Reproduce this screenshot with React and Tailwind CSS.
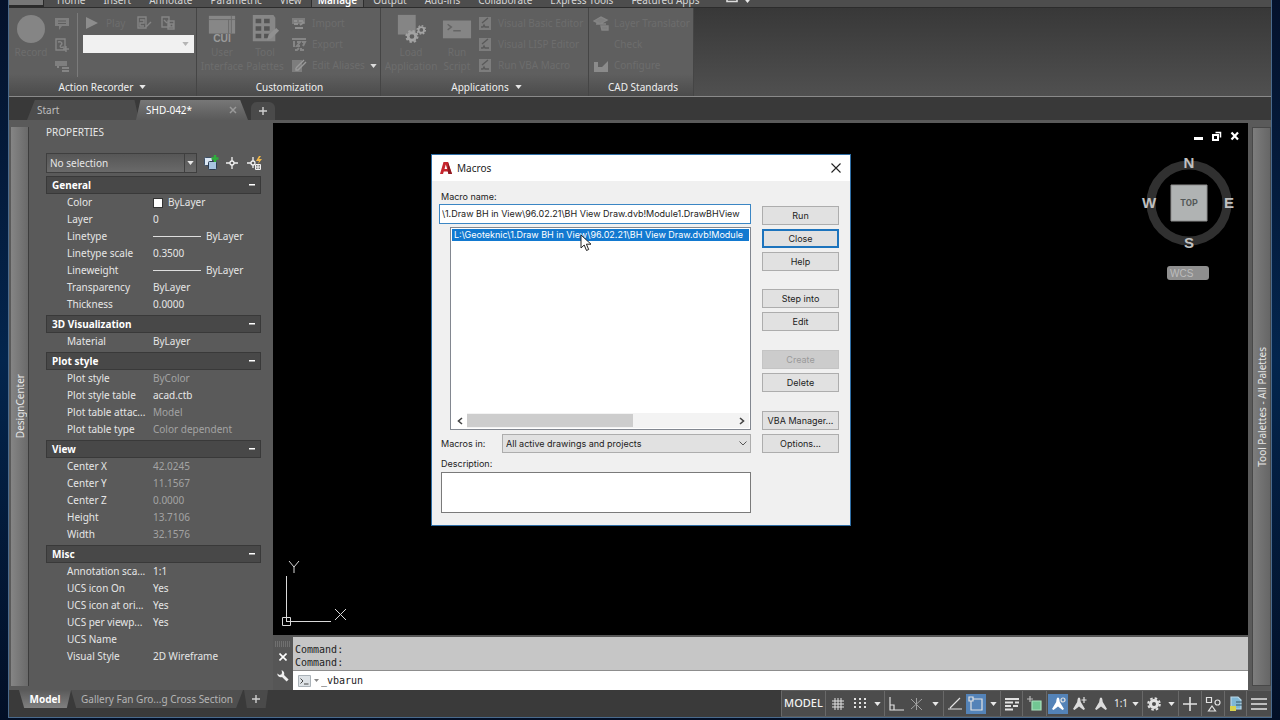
import React from "react";

const Caret = ({ className = "text-[#e8e8e8]" }) => (
  <svg viewBox="0 0 8 5" className={`h-[4px] w-[7px] shrink-0 ${className}`} fill="currentColor" aria-hidden="true">
    <path d="M0 0h8L4 5z" />
  </svg>
);

const ribbonTabs = [
  "Home", "Insert", "Annotate", "Parametric", "View", "Manage",
  "Output", "Add-ins", "Collaborate", "Express Tools", "Featured Apps",
];

function RibbonTabs() {
  return (
    <nav className="flex h-2 items-end overflow-hidden border-b border-[#2c2c2c] bg-[#4d4d4d] text-[10px] leading-[13px] text-[#d6d6d6]">
      <button aria-label="Application menu" className="mr-1 h-2 w-[35px] shrink-0 border-r border-b-2 border-[#2b2b2b] bg-[#777777]" />
      {ribbonTabs.map((t) => (
        <button
          key={t}
          className={
            t === "Manage"
              ? "h-[13px] border-x border-[#2e2e2e] bg-[#626262] px-[6px] font-semibold text-white"
              : "h-[13px] px-[9px]"
          }
        >
          {t}
        </button>
      ))}
      <button aria-label="Ribbon display" className="ml-[18px] flex h-2 items-start gap-[6px]">
        <svg viewBox="0 0 12 6" className="h-[6px] w-3" aria-hidden="true">
          <path d="M1 0v2.5h10V0" fill="none" stroke="#dcdcdc" strokeWidth="1.6" />
          <path d="M4 0h4v1H4z" fill="#dcdcdc" />
        </svg>
        <Caret />
      </button>
    </nav>
  );
}

/* disabled ribbon glyphs */
const Glyph = ({ kind }) => (
  <svg viewBox="0 0 16 16" className="h-4 w-4 shrink-0" fill="none" stroke="#858585" strokeWidth="1.4" aria-hidden="true">
    {kind === "note" && <path d="M1 2h14v8H8l-3 4v-4H1z" fill="#7f7f7f" stroke="none" />}
    {kind === "note" && <path d="M4 5h8M4 7.500h8" stroke="#5f5f5f" strokeWidth="1" />}
    {kind === "input" && <path d="M2 2h9v11H2zM4 5c3-1 5 1 3 3s0 3 3 2M12 9v6M9 12h6" />}
    {kind === "pause" && <path d="M1 3h12v5H1z" fill="#7f7f7f" stroke="none" />}
    {kind === "pause" && <path d="M4 8v2M8 10h7M8 13h7" strokeWidth="2" />}
    {kind === "manage" && <path d="M2 2h8v11H2zM4 5h4v3H4v3h4M10 12l5-5" />}
    {kind === "prefs" && <path d="M2 2h7v10H2zM4 5l3 3M8 6h6v8H8zM10 9h3v3h-3z" />}
    {kind === "import" && <path d="M1 2h13v6H1z" fill="#7d7d7d" stroke="none" />}
    {kind === "import" && <path d="M3 5h3M8 5h4M3 8h4M9 9l4-3M4 12h8" stroke="#909090" strokeWidth="2" />}
    {kind === "export" && <path d="M1 2h14M3 4v6M6 5h3l-3 4h3M11 5h3l-2 4M4 13h2l2-2M10 11v2h3" strokeWidth="2" />}
    {kind === "alias" && <path d="M1 2h10v12H1z" fill="#7d7d7d" stroke="none" />}
    {kind === "alias" && <path d="M5 10l8-8M5 10v2h2l8-8" stroke="#9a9a9a" />}
    {kind === "vba" && <path d="M2 1h12v13H2z" fill="#7d7d7d" stroke="none" />}
    {kind === "vba" && <path d="M5 7l6-5M4 11h2l1-2 1 2h4" stroke="#5a5a5a" />}
    {kind === "layer" && <path d="M1 5l7-4 6 3-7 4zM3 8h10M8 10h7v4H9z" fill="#7f7f7f" />}
    {kind === "config" && <path d="M1 4h4v5h4l6-6v11H1z" fill="#8b8b8b" stroke="none" />}
  </svg>
);

const SmallTool = ({ kind, label, caret }) => (
  <button disabled className="flex h-[21px] items-center gap-[5px] whitespace-nowrap text-[10px] text-[#6d6d6d]">
    <Glyph kind={kind} />
    {label}
    {caret && <Caret className="text-[#dddddd]" />}
  </button>
);

const BigTool = ({ label, className, children }) => (
  <button disabled className={`flex flex-col items-center text-center text-[10px] leading-[14px] text-[#6d6d6d] ${className}`}>
    <svg viewBox="0 0 32 32" className="mb-[2px] h-[30px] w-[30px]" aria-hidden="true">{children}</svg>
    {label.split(" ").map((w) => <span key={w}>{w}</span>)}
  </button>
);

const RibbonPanel = ({ title, caret, className, children }) => (
  <section className={`flex shrink-0 flex-col border-r border-[#454545] bg-linear-to-b from-[#5f5f5f] from-75% to-[#4b4b4b] ${className}`}>
    <div className="flex h-[70px] items-start overflow-hidden pt-[5px]">{children}</div>
    <h2 className="flex h-[18px] items-center justify-center gap-[6px] text-[10px] text-[#efefef]">
      {title}
      {caret && <Caret />}
    </h2>
  </section>
);

function Ribbon() {
  return (
    <div className="flex h-[89px] shrink-0 border-b border-[#8a8a8a] bg-linear-to-b from-[#383838] to-[#505050]">
      <RibbonPanel title="Action Recorder" caret className="w-[188px]">
        <button disabled className="flex w-[41px] flex-col items-center pl-[3px] text-[10px] text-[#6d6d6d]">
          <span className="mt-[2px] mb-[2px] h-7 w-7 rounded-full bg-[#858585]" />
          Record
        </button>
        <div className="ml-1 flex w-[23px] flex-col">
          {["note", "input", "pause"].map((k) => (
            <button key={k} disabled aria-label={k} className="flex h-[21px] items-center"><Glyph kind={k} /></button>
          ))}
        </div>
        <div className="flex h-16 flex-col border-l border-[#7b7b7b] pl-[5px]">
          <div className="flex h-5 items-center pl-[3px]">
            <button disabled className="flex w-12 items-center gap-2 text-[10px] text-[#6d6d6d]">
              <svg viewBox="0 0 12 12" className="h-3 w-3" aria-hidden="true"><path d="M0 0l12 6-12 6z" fill="#8d8d8d" /></svg>
              Play
            </button>
            <button disabled aria-label="Manage macros" className="mr-2 ml-[2px]"><Glyph kind="manage" /></button>
            <button disabled aria-label="Preferences"><Glyph kind="prefs" /></button>
          </div>
          <div className="mt-[2px] flex h-[18px] w-[111px] items-center justify-end bg-[#f1f1f1] pr-[5px]">
            <Caret className="text-[#b5b5b5]" />
          </div>
        </div>
      </RibbonPanel>
      <RibbonPanel title="Customization" className="w-[184px] pl-[2px]">
        <BigTool label="User Interface" className="w-[46px]">
          <path d="M2 3h28v19H2z" fill="#878787" />
          <path d="M2 7h28M23 7v15M26 3v19" stroke="#6c6c6c" />
          <text x="16" y="31" textAnchor="middle" fontSize="11" fontWeight="700" fontFamily="Liberation Sans, sans-serif" fill="#9a9a9a">CUI</text>
        </BigTool>
        <BigTool label="Tool Palettes" className="w-10">
          <path d="M3 2h22l2 3v25H3z" fill="#878787" />
          <path d="M6 6h6v5H6zM15 6h6v5h-6zM6 14h6v5H6zM15 14h6v5h-6zM6 22h6v5H6zM15 22h6v5h-6z" fill="#555" />
          <path d="M18 29l2-6 8-7 3 3-8 8z" fill="#909090" />
        </BigTool>
        <div className="ml-[6px] flex flex-col">
          <SmallTool kind="import" label="Import" />
          <SmallTool kind="export" label="Export" />
          <SmallTool kind="alias" label="Edit Aliases" caret />
        </div>
      </RibbonPanel>
      <RibbonPanel title="Applications" caret className="w-[208px] pl-1">
        <BigTool label="Load Application" className="w-[52px]">
          <path d="M2 2h19v21H2z" fill="#858585" />
          <circle cx="17" cy="25" r="4" fill="none" stroke="#a3a3a3" strokeWidth="3" />
          <circle cx="17" cy="25" r="6" fill="none" stroke="#a3a3a3" strokeWidth="2" strokeDasharray="2.500 2.200" />
          <circle cx="27" cy="18" r="3" fill="none" stroke="#a3a3a3" strokeWidth="2" />
          <circle cx="27" cy="18" r="4.500" fill="none" stroke="#a3a3a3" strokeWidth="1.500" strokeDasharray="1.800 1.700" />
        </BigTool>
        <BigTool label="Run Script" className="w-10">
          <path d="M1 8h30v19H1z" fill="#858585" />
          <path d="M6 12l4 3-4 3M12 19h8" fill="none" stroke="#646464" strokeWidth="1.500" />
        </BigTool>
        <div className="flex flex-col">
          <SmallTool kind="vba" label="Visual Basic Editor" />
          <SmallTool kind="vba" label="Visual LISP Editor" />
          <SmallTool kind="vba" label="Run VBA Macro" />
        </div>
      </RibbonPanel>
      <RibbonPanel title="CAD Standards" className="w-[105px] pl-1">
        <div className="flex flex-col">
          <SmallTool kind="layer" label="Layer Translator" />
          <SmallTool kind="check" label="Check" />
          <SmallTool kind="config" label="Configure" />
        </div>
      </RibbonPanel>
    </div>
  );
}

function DocumentTabs() {
  return (
    <div className="flex h-[26px] shrink-0 items-end border-b-[3px] border-[#5a5a5a] bg-[#393939] pl-[18px] text-[10px] text-[#bdbdbd]">
      <button className="h-5 w-[112px] bg-[#4c4c4c] pl-[10px] text-left [clip-path:polygon(7%_0,96%_0,100%_100%,0_100%)]">Start</button>
      <div className="-ml-[3px] flex h-5 w-28 items-center justify-between bg-linear-to-b from-[#777777] to-[#5a5a5a] pr-[11px] pl-[10px] text-white [clip-path:polygon(4%_0,93%_0,100%_100%,0_100%)]">
        <button>SHD-042*</button>
        <button aria-label="Close tab">
          <svg viewBox="0 0 8 8" className="h-2 w-2" aria-hidden="true"><path d="M1 1l6 6M7 1L1 7" stroke="#9a9a9a" strokeWidth="1.500" /></svg>
        </button>
      </div>
      <button aria-label="New drawing" className="ml-[3px] flex h-[18px] w-6 items-center justify-center rounded-t-md bg-[#4a4a4a]">
        <svg viewBox="0 0 8 8" className="h-2 w-2" aria-hidden="true"><path d="M4 0v8M0 4h8" stroke="#cfcfcf" strokeWidth="1.400" /></svg>
      </button>
    </div>
  );
}

const Line = ({ children }) => (
  <span className="flex items-center gap-[5px]"><span className="h-px w-12 bg-[#dedede]" />{children}</span>
);

const groups = [
  ["General", [
    ["Color", <span className="flex items-center gap-[6px]"><span className="ml-px h-2 w-2 bg-white outline outline-[#333333]" />ByLayer</span>],
    ["Layer", "0"],
    ["Linetype", <Line>ByLayer</Line>],
    ["Linetype scale", "0.3500"],
    ["Lineweight", <Line>ByLayer</Line>],
    ["Transparency", "ByLayer"],
    ["Thickness", "0.0000"],
  ]],
  ["3D Visualization", [["Material", "ByLayer"]]],
  ["Plot style", [
    ["Plot style", "ByColor", true],
    ["Plot style table", "acad.ctb"],
    ["Plot table attac...", "Model", true],
    ["Plot table type", "Color dependent", true],
  ]],
  ["View", [
    ["Center X", "42.0245", true],
    ["Center Y", "11.1567", true],
    ["Center Z", "0.0000", true],
    ["Height", "13.7106", true],
    ["Width", "32.1576", true],
  ]],
  ["Misc", [
    ["Annotation sca...", "1:1"],
    ["UCS icon On", "Yes"],
    ["UCS icon at ori...", "Yes"],
    ["UCS per viewp...", "Yes"],
    ["UCS Name", ""],
    ["Visual Style", "2D Wireframe"],
  ]],
];

function PropertiesPanel() {
  return (
    <aside className="flex w-[264px] shrink-0 bg-[#5a5a5a] text-[10px] text-[#e6e6e6]">
      <div className="mt-1 mb-1 ml-[2px] flex w-[18px] shrink-0 items-center justify-center border-r border-[#3d3d3d] bg-linear-to-r from-[#858585] to-[#6a6a6a] pl-[2px]">
        <span className="rotate-180 whitespace-nowrap [writing-mode:vertical-rl]">DesignCenter</span>
      </div>
      <div className="flex min-w-0 flex-1 flex-col pr-3 pl-[17px]">
        <h2 className="h-[30px] pt-[2px] leading-[14px]">PROPERTIES</h2>
        <div className="mb-[3px] flex h-5 items-center gap-[6px]">
          <button className="flex h-5 w-[151px] shrink-0 items-center justify-between border border-[#3f3f3f] bg-linear-to-b from-[#565656] to-[#6a6a6a] pl-[3px]">
            No selection
            <span className="flex h-full w-3 items-center justify-center border-l border-[#3f3f3f]"><Caret /></span>
          </button>
          <button aria-label="Toggle PICKADD" className="shrink-0">
            <svg viewBox="0 0 16 16" className="h-4 w-4" aria-hidden="true">
              <rect x="1.500" y="2.500" width="8" height="8" rx="1" fill="#dbe7f3" stroke="#3c4f66" />
              <rect x="5.500" y="6.500" width="8" height="8" rx="1" fill="#a8c4e0" stroke="#2c3c50" />
              <path d="M12 0v7M8.500 3.500h7" stroke="#2fae3c" strokeWidth="2.400" />
            </svg>
          </button>
          <button aria-label="Select objects" className="shrink-0">
            <svg viewBox="0 0 16 16" className="h-4 w-4" fill="none" stroke="#f1f1f1" strokeWidth="1.300" aria-hidden="true">
              <circle cx="7" cy="8" r="2" /><path d="M7 2v4M7 10v4M1 8h4M9 8h4" />
            </svg>
          </button>
          <button aria-label="Quick select" className="shrink-0">
            <svg viewBox="0 0 16 16" className="h-4 w-4" fill="none" stroke="#f1f1f1" strokeWidth="1.300" aria-hidden="true">
              <circle cx="6" cy="8" r="2" /><path d="M6 2v4M6 10v3M0 8h4" />
              <path d="M12 1L9 6h3l-1 3 4-5h-3l2-3z" fill="#f1b84a" stroke="none" />
              <path d="M8.500 9.500h5v5h-5zM11 9.500v5M8.500 12h5" fill="#777" strokeWidth="1" />
            </svg>
          </button>
        </div>
        <div className="flex flex-col gap-[2px]">
          {groups.map(([title, rows]) => (
            <section key={title}>
              <button className="flex h-[18px] w-full items-center justify-between border border-[#393939] bg-[#484848] px-[5px] text-[10px] font-bold text-white">
                {title}
                <svg viewBox="0 0 6 2" className="h-[2px] w-[6px]" aria-hidden="true"><path d="M0 0h6v1.500H0z" fill="#fff" /></svg>
              </button>
              <table className="w-full table-fixed">
                <tbody>
                  {rows.map(([name, value, dim]) => (
                    <tr key={name} className="h-[17px] whitespace-nowrap leading-[17px]">
                      <th scope="row" className="w-[107px] p-0 pl-[21px] text-left font-normal">{name}</th>
                      <td className={dim ? "p-0 text-[#a3a3a3]" : "p-0"}>{value}</td>
                    </tr>
                  ))}
                </tbody>
              </table>
            </section>
          ))}
        </div>
      </div>
    </aside>
  );
}

const DialogButton = ({ children, primary, className = "", ...rest }) => (
  <button
    className={`h-[19px] w-full whitespace-nowrap text-center leading-[15px] ${
      primary ? "border-2 border-[#1d74bd]" : "border border-[#adadad]"
    } bg-[#e1e1e1] disabled:border-[#c4c4c4] disabled:bg-[#cccccc] disabled:text-[#9a9a9a] ${className}`}
    {...rest}
  >
    {children}
  </button>
);

function MacrosDialog() {
  return (
    <div role="dialog" aria-labelledby="dlg-title" className="absolute top-[31px] left-[158px] w-[420px] border border-[#2f6ea5] bg-[#f0f0f0] font-[Inter,'Liberation_Sans',sans-serif] text-[9px] text-[#1c1c1c]">
      <header className="flex h-[26px] items-center bg-white pr-[9px] pl-[8px]">
        <svg viewBox="0 0 12 12" className="mr-[5px] h-3 w-3" aria-hidden="true">
          <path d="M0 12L3.500 0h4.500L12 12H8.500L7.800 9.500H3.800L3 12z" fill="#c6262e" />
          <path d="M4.500 7L5.800 2.500 7.200 7z" fill="#fff" />
          <path d="M8 0l4 12H8.500L7.800 9.500z" fill="#8e1a22" />
        </svg>
        <h1 id="dlg-title" className="flex-1 font-['Noto_Sans',sans-serif] text-[10px]">Macros</h1>
        <button aria-label="Close dialog">
          <svg viewBox="0 0 10 10" className="h-[10px] w-[10px]" aria-hidden="true"><path d="M0.500 0.500l9 9M9.500 0.500l-9 9" stroke="#222" strokeWidth="1.100" /></svg>
        </button>
      </header>
      <div className="flex gap-[11px] pr-[11px] pb-3 pl-[7px]">
        <div className="flex min-w-0 flex-1 flex-col">
          <label htmlFor="macro-name" className="mt-2 ml-[2px] h-[15px] leading-[15px]">Macro name:</label>
          <input
            id="macro-name"
            type="text"
            defaultValue="\1.Draw BH in View\96.02.21\BH View Draw.dvb!Module1.DrawBHView"
            className="h-5 w-full border border-[#3b86c4] bg-white px-[2px] pb-px outline-none"
          />
          <div className="mt-[3px] ml-[11px] flex h-[203px] flex-col border border-[#828790] bg-white p-px">
            <ul role="listbox" aria-label="Macros" className="flex-1 overflow-hidden">
              <li role="option" aria-selected="true" className="h-3 overflow-hidden bg-[#1279d0] pl-[2px] leading-3 whitespace-nowrap text-white">
                L:\Geoteknic\1.Draw BH in View\96.02.21\BH View Draw.dvb!Module
              </li>
            </ul>
            <div className="flex h-[15px] items-center bg-[#f3f3f3]">
              <button aria-label="Scroll left" className="flex h-full w-[15px] items-center justify-center bg-white">
                <svg viewBox="0 0 6 8" className="h-2 w-[6px]" fill="none" stroke="#444" strokeWidth="1.600" aria-hidden="true"><path d="M5 1L1.500 4 5 7" /></svg>
              </button>
              <div className="flex-1"><div className="h-[13px] w-[62%] bg-[#cdcdcd]" /></div>
              <button aria-label="Scroll right" className="flex h-full w-[15px] items-center justify-center">
                <svg viewBox="0 0 6 8" className="h-2 w-[6px]" fill="none" stroke="#444" strokeWidth="1.600" aria-hidden="true"><path d="M1 1l3.500 3L1 7" /></svg>
              </button>
            </div>
          </div>
          <div className="mt-1 flex items-center">
            <label htmlFor="macros-in" className="w-[63px] pl-[2px]">Macros in:</label>
            <div className="relative flex-1">
              <select id="macros-in" className="block h-[19px] w-full appearance-none border border-[#adadad] bg-[#e1e1e1] pl-[3px]">
                <option>All active drawings and projects</option>
              </select>
              <svg viewBox="0 0 8 5" className="pointer-events-none absolute top-[7px] right-[4px] h-[5px] w-2" fill="none" stroke="#555" aria-hidden="true"><path d="M0.500 0.500L4 4l3.500-3.500" /></svg>
            </div>
          </div>
          <label htmlFor="desc" className="mt-[2px] ml-[2px] h-[17px] leading-[17px]">Description:</label>
          <textarea id="desc" className="ml-[2px] h-[41px] resize-none border border-[#7a7a7a] bg-white outline-none" />
        </div>
        <div className="mt-[25px] flex w-[77px] shrink-0 flex-col gap-1">
          <DialogButton>Run</DialogButton>
          <DialogButton primary>Close</DialogButton>
          <DialogButton>Help</DialogButton>
          <DialogButton className="mt-[14px]">Step into</DialogButton>
          <DialogButton>Edit</DialogButton>
          <DialogButton className="mt-[15px]" disabled>Create</DialogButton>
          <DialogButton>Delete</DialogButton>
          <DialogButton className="mt-[15px]">VBA Manager...</DialogButton>
          <DialogButton>Options...</DialogButton>
        </div>
      </div>
      <svg viewBox="0 0 12 18" className="absolute top-[79px] left-[148px] h-[18px] w-3" aria-hidden="true">
        <path d="M1 1v13l3.200-3 2.300 5.500 2.200-1-2.300-5.300H11z" fill="#fff" stroke="#222" />
      </svg>
    </div>
  );
}

function DrawingArea() {
  return (
    <main className="relative min-h-[512px] flex-1 overflow-hidden bg-black">
      <div className="absolute top-[8px] right-[8px] flex gap-2">
        <button aria-label="Minimize"><svg viewBox="0 0 10 10" className="h-[10px] w-[10px]" aria-hidden="true"><path d="M0 6h9v3H0z" fill="#fff" /></svg></button>
        <button aria-label="Restore"><svg viewBox="0 0 10 10" className="h-[10px] w-[10px]" fill="none" stroke="#fff" aria-hidden="true"><path d="M1 4h5v5H1z" strokeWidth="2" /><path d="M3.500 1.500h5v5" strokeWidth="1.500" /></svg></button>
        <button aria-label="Close drawing"><svg viewBox="0 0 10 10" className="h-[10px] w-[10px]" aria-hidden="true"><path d="M1.500 1.500l6.500 7M8 1.500l-6.500 7" stroke="#fff" strokeWidth="2.200" /></svg></button>
      </div>
      <svg viewBox="0 0 100 130" className="absolute top-[29px] right-[9px] h-[130px] w-[100px]" fontFamily="Liberation Sans, sans-serif" aria-hidden="true">
        <circle cx="50" cy="51" r="38" fill="none" stroke="#303030" strokeWidth="9" />
        <path d="M32 33h36v36H32z" fill="#b0b3b3" stroke="#8d8d8d" />
        <g fill="#c0c0c0" fontSize="15" fontWeight="700" textAnchor="middle">
          <text x="50" y="16">N</text>
          <text x="50" y="96">S</text>
          <text x="10" y="56">W</text>
          <text x="90" y="56">E</text>
        </g>
        <text x="50" y="54" fontSize="9" fontWeight="700" textAnchor="middle" fill="#545858" fontFamily="Roboto, sans-serif">TOP</text>
        <rect x="28" y="114" width="42" height="14" rx="3" fill="#8f8f8f" />
        <text x="31" y="125" fontSize="10" fill="#bdbdbd">WCS</text>
      </svg>
      <svg viewBox="0 0 80 80" className="absolute bottom-2 left-2 h-20 w-20" fill="none" stroke="#d9d9d9" aria-hidden="true">
        <path d="M5.500 29v45M5 74.500h45M1.500 70.500h8v8h-8zM8 14l5 6 5-6M13 20v6M54 62l11 11M65 62L54 73" />
      </svg>
      <MacrosDialog />
    </main>
  );
}

function CommandLine() {
  return (
    <div className="flex h-[55px] shrink-0 border-t-2 border-[#555] font-['DejaVu_Sans_Mono',monospace] text-[10px] text-[#222]">
      <div className="flex w-5 shrink-0 flex-col items-center bg-[#565656] pt-1">
        <svg viewBox="0 0 16 6" className="mb-[6px] h-[6px] w-4" aria-hidden="true"><path d="M0 1h16M0 3h16M0 5h16" stroke="#8a8a8a" strokeDasharray="1 1" /></svg>
        <button aria-label="Close command line" className="mb-[9px]"><svg viewBox="0 0 8 8" className="h-2 w-2" aria-hidden="true"><path d="M0.500 0.500l7 7M7.500 0.500l-7 7" stroke="#fff" strokeWidth="1.600" /></svg></button>
        <button aria-label="Customize">
          <svg viewBox="0 0 12 12" className="h-3 w-3" aria-hidden="true"><path d="M4.500 0.300A3.500 3.500 0 0 1 7 5l4.600 4.400-2 2.200L5 7A3.500 3.500 0 0 1 0.300 3.500L2.500 5 4.600 4.300 5 2.200z" fill="#efefef" /></svg>
        </button>
      </div>
      <div className="flex min-w-0 flex-1 flex-col">
        <div className="h-[34px] border-b border-[#8d8d8d] bg-[#c6c6c6] pt-[6px] pl-[2px] leading-[13px]">
          <p>Command:</p>
          <p>Command:</p>
        </div>
        <div className="flex flex-1 items-center bg-white pl-[5px]">
          <svg viewBox="0 0 13 12" className="h-3 w-[13px] shrink-0" aria-hidden="true">
            <path d="M0.500 0.500h12v11h-12z" fill="#dde2e6" stroke="#aab2b8" />
            <path d="M2.500 3.500L5 6 2.500 8.500M6 9h4.500" fill="none" stroke="#444" />
          </svg>
          <svg viewBox="0 0 5 3" className="mr-[2px] ml-[3px] h-[3px] w-[5px] shrink-0" aria-hidden="true"><path d="M0 0h5L2.500 3z" fill="#888" /></svg>
          <input aria-label="Command" defaultValue="_vbarun" className="min-w-0 flex-1 bg-transparent outline-none" />
        </div>
      </div>
    </div>
  );
}

const StatusButton = ({ label, className, active, sep, children }) => (
  <button
    aria-label={label}
    className={`flex shrink-0 items-center justify-center ${sep ? "border-l border-[#696969]" : ""} ${className}`}
  >
    {children && (
      <span className={`flex h-5 w-5 items-center justify-center ${active ? "bg-[#5483b8]" : ""}`}>
        <svg viewBox="0 0 16 16" className="h-4 w-4" fill="none" stroke="#e2e2e2" strokeWidth="1.200" aria-hidden="true">{children}</svg>
      </span>
    )}
    {!children && <Caret />}
  </button>
);

const person = "M8 1.500c1.500 0 1.500 3 1.800 4.500l4.200 7-1.500 1L8 10.500 3.500 14 2 13l4.200-7C6.500 4.500 6.500 1.500 8 1.500z";

function StatusBar() {
  return (
    <footer className="flex h-[27px] shrink-0 items-stretch bg-[#3a3a3a] text-[10px]">
      <div className="flex h-[18px] flex-1 items-stretch pl-[10px] text-[#b5b5b5]">
        <button className="w-[52px] bg-linear-to-b from-[#5a5a5a] to-[#808080] font-bold text-white [clip-path:polygon(0_0,100%_0,92%_100%,10%_100%)]">Model</button>
        <button className="w-[172px] bg-[#4f4f4f] [clip-path:polygon(0_0,100%_0,96%_100%,3%_100%)]">Gallery Fan Gro...g Cross Section</button>
        <button aria-label="New layout" className="ml-px flex w-6 items-center justify-center bg-[#4a4a4a] [clip-path:polygon(0_0,100%_0,90%_100%,12%_100%)]">
          <svg viewBox="0 0 8 8" className="h-2 w-2" aria-hidden="true"><path d="M4 0v8M0 4h8" stroke="#cfcfcf" strokeWidth="1.400" /></svg>
        </button>
      </div>
      <div className="flex h-[27px] border-y border-[#5c5c5c] bg-[#4c4c4c]">
        <button className="w-11 shrink-0 border-l border-[#696969] text-center text-[11px] font-medium text-[#f2f2f2]">MODEL</button>
        <StatusButton label="Grid" sep className="w-6"><path d="M5 2v12M8 2v12M11 2v12M2 5h12M2 8h12M2 11h12" strokeWidth="1" /></StatusButton>
        <StatusButton label="Snap" className="w-[21px]">
          <path d="M2 3h12M2 7h12M2 11h12" strokeDasharray="2 3" strokeWidth="2" />
        </StatusButton>
        <StatusButton label="Snap options" className="w-[14px]" />
        <StatusButton label="Ortho" sep className="w-[23px]"><path d="M2 1v13h14M2 9h4v5" /></StatusButton>
        <StatusButton label="Polar tracking" className="w-5"><path d="M2 3l11 11M7.500 2v12M2 13L13 3" stroke="#a0a0a0" strokeWidth="1" /></StatusButton>
        <StatusButton label="Polar options" className="w-4" />
        <StatusButton label="Object snap tracking" sep className="w-[22px]"><path d="M1 13h14M3 12L13 2" /></StatusButton>
        <StatusButton label="Object snap" active className="w-[21px]"><path d="M3 3h11v11H3z" /><path d="M1 1h4v4H1z" fill="#5483b8" /></StatusButton>
        <StatusButton label="Object snap options" className="w-[14px]" />
        <StatusButton label="Lineweight" sep className="w-[22px]"><path d="M1 3h14M1 6.500h8M11 6.500h4M1 10h6M9 10h5M1 13.500h8" strokeWidth="2" /></StatusButton>
        <StatusButton label="Selection cycling" sep className="w-6"><path d="M5 5h9v9H5z" fill="#72c793" stroke="#a9e2bd" /><path d="M0 3h6M3 0v6" stroke="#bbb" /></StatusButton>
        <StatusButton label="Annotation visibility" sep active className="w-[22px]"><path d={person} fill="#fff" stroke="none" /><circle cx="13" cy="4" r="2" /></StatusButton>
        <StatusButton label="Auto scale" className="w-[22px]"><path d={person} fill="#dcdcdc" stroke="none" /><path d="M13 1v6M10.500 4h5" /></StatusButton>
        <StatusButton label="Annotation scale icon" className="w-[21px]"><path d={person} fill="#dcdcdc" stroke="none" /></StatusButton>
        <button className="flex w-[31px] shrink-0 items-center justify-center gap-1 text-[#f0f0f0]">1:1<Caret /></button>
        <StatusButton label="Workspace" sep className="w-[23px]"><circle cx="8" cy="8" r="3.500" strokeWidth="3" /><circle cx="8" cy="8" r="5.800" strokeWidth="2" strokeDasharray="2.500 2.050" /></StatusButton>
        <StatusButton label="Workspace options" className="w-[13px]" />
        <StatusButton label="Annotation monitor" sep className="w-[23px]"><path d="M8 1v14M1 8h14" strokeWidth="1.600" /></StatusButton>
        <StatusButton label="Isolate objects" sep className="w-[23px]"><path d="M1.500 1.500h5v5h-5zM7 10l3.500 5h-7z" /><circle cx="12.500" cy="6.500" r="2.500" /></StatusButton>
        <StatusButton label="Hardware acceleration" sep className="w-[22px]"><path d="M3 1h7l3 3v9H3z" fill="#7fb7d6" stroke="#b9d8e8" /><path d="M2 10h6v5H2z" fill="#d8d24e" stroke="none" /><path d="M8 6h6M8 9h6" stroke="#356" /></StatusButton>
        <StatusButton label="Customization" sep className="w-[25px]"><path d="M0 3h16M0 8h16M0 13h16" strokeWidth="1.600" /></StatusButton>
      </div>
    </footer>
  );
}

export default function App() {
  return (
    <div className="flex min-h-screen bg-linear-to-b from-[#04122c] via-[#03254d] to-[#020f26] px-2 pb-[2px] font-['Noto_Sans','Open_Sans',sans-serif]">
      <div className="flex min-w-0 flex-1 flex-col border-x border-b border-[#4a6a8c] bg-[#5a5a5a]">
        <RibbonTabs />
        <Ribbon />
        <DocumentTabs />
        <div className="flex flex-1">
          <PropertiesPanel />
          <div className="flex min-w-0 flex-1 flex-col">
            <DrawingArea />
            <CommandLine />
          </div>
          <aside className="flex w-[23px] shrink-0 py-1 pr-[2px] pl-1">
            <div className="flex flex-1 items-center justify-center border border-[#484848] bg-linear-to-r from-[#7d7d7d] to-[#666666] pl-[2px] text-[10px] text-[#e6e6e6]">
              <span className="rotate-180 whitespace-nowrap [writing-mode:vertical-rl]">Tool Palettes - All Palettes</span>
            </div>
          </aside>
        </div>
        <StatusBar />
      </div>
    </div>
  );
}
